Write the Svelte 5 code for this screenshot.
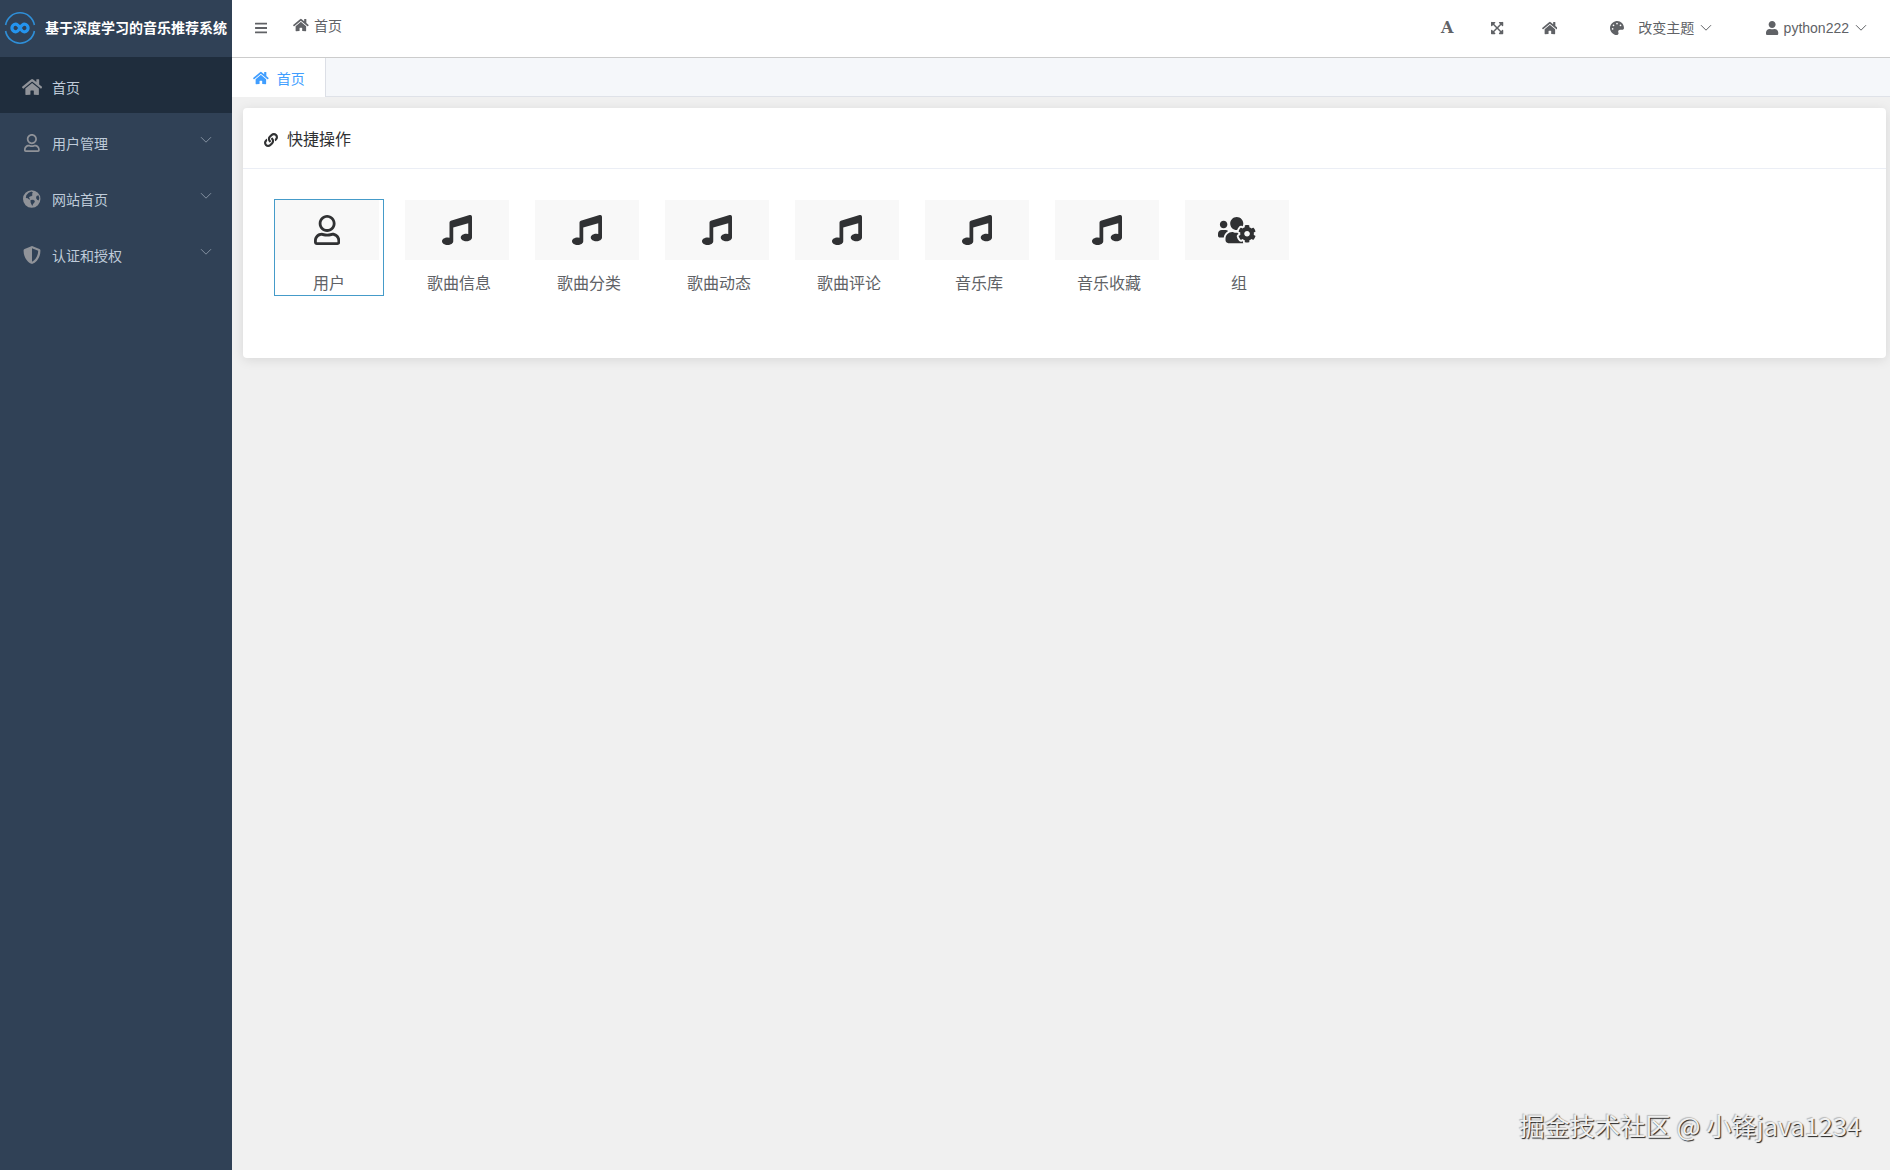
<script lang="ts">
	type Icon = { box: string; d: string };

	const icons: Record<string, Icon> = {
		home: {
			box: '0 0 576 512',
			d: 'M280.37 148.26L96 300.11V464a16 16 0 0 0 16 16l112.06-.29a16 16 0 0 0 15.92-16V368a16 16 0 0 1 16-16h64a16 16 0 0 1 16 16v95.64a16 16 0 0 0 16 16.05L464 480a16 16 0 0 0 16-16V300L295.67 148.26a12.19 12.19 0 0 0-15.3 0zM571.6 251.47L488 182.56V44.05a12 12 0 0 0-12-12h-56a12 12 0 0 0-12 12v72.61L318.47 43a48 48 0 0 0-61 0L4.34 251.47a12 12 0 0 0-1.6 16.9l25.5 31A12 12 0 0 0 45.15 301l235.22-193.74a12.19 12.19 0 0 1 15.3 0L530.9 301a12 12 0 0 0 16.9-1.6l25.5-31a12 12 0 0 0-1.7-16.93z'
		},
		userLine: {
			box: '0 0 448 512',
			d: 'M313.6 304c-28.7 0-42.5 16-89.6 16-47.1 0-60.8-16-89.6-16C60.2 304 0 364.2 0 438.4V464c0 26.5 21.5 48 48 48h352c26.5 0 48-21.5 48-48v-25.6c0-74.2-60.2-134.4-134.4-134.4zM400 464H48v-25.6c0-47.6 38.8-86.4 86.4-86.4 14.6 0 38.3 16 89.6 16 51.7 0 74.9-16 89.6-16 47.6 0 86.4 38.8 86.4 86.4V464zM224 288c79.5 0 144-64.5 144-144S303.5 0 224 0 80 64.5 80 144s64.5 144 144 144zm0-240c52.9 0 96 43.1 96 96s-43.1 96-96 96-96-43.1-96-96 43.1-96 96-96z'
		},
		user: {
			box: '0 0 448 512',
			d: 'M224 256c70.7 0 128-57.3 128-128S294.7 0 224 0 96 57.3 96 128s57.3 128 128 128zm89.6 32h-16.7c-22.2 10.2-46.9 16-72.9 16s-50.6-5.8-72.9-16h-16.7C60.2 288 0 348.2 0 422.4V464c0 26.5 21.5 48 48 48h352c26.5 0 48-21.5 48-48v-41.6c0-74.2-60.2-134.4-134.4-134.4z'
		},
		music: {
			box: '0 0 512 512',
			d: 'M470.38 1.51L150.41 96A32 32 0 0 0 128 126.51v261.41A139 139 0 0 0 96 384c-53 0-96 28.66-96 64s43 64 96 64 96-28.66 96-64V214.32l256-75v184.61a138.4 138.4 0 0 0-32-3.93c-53 0-96 28.66-96 64s43 64 96 64 96-28.65 96-64V32a32 32 0 0 0-41.62-30.49z'
		},
		globe: {
			box: '0 0 496 512',
			d: 'M248 8a248 248 0 1 0 0 496a248 248 0 1 0 0-496zM95 150L160 75L240 45L285 75L250 115L275 145L235 180L195 185L165 225L205 250L180 275L135 235L80 225zM215 285L290 280L340 310L320 365L285 400L265 455L235 400L215 345zM385 170L440 150L465 225L445 300L400 275L370 225z'
		},
		shield: {
			box: '0 0 512 512',
			d: 'M466.5 83.7l-192-80a48.15 48.15 0 0 0-36.9 0l-192 80C27.7 91.1 16 108.6 16 128c0 198.5 114.5 335.7 221.5 380.3 11.8 4.9 25.1 4.9 36.9 0C360.1 472.6 496 349.3 496 128c0-19.4-11.7-36.9-29.5-44.3zM256.1 446.3l-.1-381 175.9 73.3c-3.3 151.4-82.1 261.1-175.8 307.7z'
		},
		palette: {
			box: '0 0 512 512',
			d: 'M204.3 5C104.9 24.4 24.8 104.3 5.2 203.4c-37 187 131.7 326.4 258.8 306.7 41.2-6.4 61.4-54.6 42.5-91.7-23.1-45.4 9.9-98.4 60.9-98.4h79.7c35.8 0 64.8-29.6 64.9-65.3C511.5 97.1 368.1-26.9 204.3 5zM96 320c-17.7 0-32-14.3-32-32s14.3-32 32-32 32 14.3 32 32-14.3 32-32 32zm32-128c-17.7 0-32-14.3-32-32s14.3-32 32-32 32 14.3 32 32-14.3 32-32 32zm128-64c-17.7 0-32-14.3-32-32s14.3-32 32-32 32 14.3 32 32-14.3 32-32 32zm128 64c-17.7 0-32-14.3-32-32s14.3-32 32-32 32 14.3 32 32-14.3 32-32 32z'
		},
		bars: {
			box: '0 0 448 512',
			d: 'M16 60h416a16 16 0 0 1 16 16v40a16 16 0 0 1-16 16H16a16 16 0 0 1-16-16V76a16 16 0 0 1 16-16zM16 220h416a16 16 0 0 1 16 16v40a16 16 0 0 1-16 16H16a16 16 0 0 1-16-16v-40a16 16 0 0 1 16-16zM16 380h416a16 16 0 0 1 16 16v40a16 16 0 0 1-16 16H16a16 16 0 0 1-16-16v-40a16 16 0 0 1 16-16z'
		},
		expand: {
			box: '0 0 448 512',
			d: 'M448 344v112a23.94 23.94 0 0 1-24 24H312c-21.39 0-32.09-25.9-17-41l36.2-36.2L224 295.6 116.77 402.9 153 439c15.09 15.1 4.39 41-17 41H24a23.94 23.94 0 0 1-24-24V344c0-21.4 25.89-32.1 41-17l36.19 36.2L184.46 256 77.18 148.7 41 185c-15.1 15.1-41 4.4-41-17V56a23.94 23.94 0 0 1 24-24h112c21.39 0 32.09 25.9 17 41l-36.2 36.2L224 216.4l107.23-107.3L295 73c-15.09-15.1-4.39-41 17-41h112a23.94 23.94 0 0 1 24 24v112c0 21.4-25.89 32.1-41 17l-36.19-36.2L263.54 256l107.28 107.3L407 327.1c15.1-15.2 41-4.5 41 16.9z'
		},
		link: {
			box: '0 0 512 512',
			d: 'M326.612 185.391c59.747 59.809 58.927 155.698.36 214.59-.11.12-.24.25-.36.37l-67.2 67.2c-59.27 59.27-155.699 59.262-214.96 0-59.27-59.26-59.27-155.7 0-214.96l37.106-37.106c9.84-9.84 26.786-3.3 27.294 10.606.648 17.722 3.826 35.527 9.69 52.721 1.986 5.822.567 12.262-3.783 16.612l-13.087 13.087c-28.026 28.026-28.905 73.66-1.155 101.96 28.024 28.579 74.086 28.749 102.325.51l67.2-67.19c28.191-28.191 28.073-73.757 0-101.83-3.701-3.694-7.429-6.564-10.341-8.569a16.037 16.037 0 0 1-6.947-12.606c-.396-10.567 3.348-21.456 11.698-29.806l21.054-21.055c5.521-5.521 14.182-6.199 20.584-1.731a152.482 152.482 0 0 1 20.522 17.197zM467.547 44.449c-59.261-59.262-155.69-59.27-214.96 0l-67.2 67.2c-.12.12-.25.25-.36.37-58.566 58.892-59.387 154.781.36 214.59a152.454 152.454 0 0 0 20.521 17.196c6.402 4.468 15.064 3.789 20.584-1.731l21.054-21.055c8.35-8.35 12.094-19.239 11.698-29.806a16.037 16.037 0 0 0-6.947-12.606c-2.912-2.005-6.64-4.875-10.341-8.569-28.073-28.073-28.191-73.639 0-101.83l67.2-67.19c28.239-28.239 74.3-28.069 102.325.51 27.75 28.3 26.872 73.934-1.155 101.96l-13.087 13.087c-4.35 4.35-5.769 10.79-3.783 16.612 5.864 17.194 9.042 34.999 9.69 52.721.509 13.906 17.454 20.446 27.294 10.606l37.106-37.106c59.271-59.259 59.271-155.699.001-214.959z'
		},
		usersCog: {
			box: '0 0 640 512',
			d: 'M610.5 341.3c2.6-14.1 2.6-28.5 0-42.6l25.8-14.9c3-1.7 4.3-5.2 3.3-8.5-6.7-21.6-18.2-41.2-33.2-57.4-2.3-2.5-6-3.1-9-1.4l-25.8 14.9c-10.9-9.3-23.4-16.5-36.9-21.3v-29.8c0-3.4-2.4-6.4-5.7-7.1-22.3-5-45-4.8-66.2 0-3.3.7-5.7 3.7-5.7 7.1v29.8c-13.5 4.8-26 12-36.9 21.3l-25.8-14.9c-2.9-1.7-6.7-1.1-9 1.4-15 16.2-26.5 35.8-33.2 57.4-1 3.3.4 6.8 3.3 8.5l25.8 14.9c-2.6 14.1-2.6 28.5 0 42.6l-25.8 14.9c-3 1.7-4.3 5.2-3.3 8.5 6.7 21.6 18.2 41.1 33.2 57.4 2.3 2.5 6 3.1 9 1.4l25.8-14.9c10.9 9.3 23.4 16.5 36.9 21.3v29.8c0 3.4 2.4 6.4 5.7 7.1 22.3 5 45 4.8 66.2 0 3.3-.7 5.7-3.7 5.7-7.1v-29.8c13.5-4.8 26-12 36.9-21.3l25.8 14.9c2.9 1.7 6.7 1.1 9-1.4 15-16.2 26.5-35.8 33.2-57.4 1-3.3-.4-6.8-3.3-8.5l-25.8-14.9zM496 368.5c-26.8 0-48.5-21.8-48.5-48.5s21.8-48.5 48.5-48.5 48.5 21.8 48.5 48.5-21.7 48.5-48.5 48.5zM96 224c35.3 0 64-28.7 64-64s-28.7-64-64-64-64 28.7-64 64 28.7 64 64 64zm224 32c1.9 0 3.7-.5 5.6-.6 8.3-21.7 20.5-42.1 36.3-59.2 7.4-8 17.9-12.6 28.9-12.6 6.9 0 13.7 1.8 19.6 5.3l7.9 4.6c.8-.5 1.6-.9 2.4-1.4 7-14.6 11.2-30.8 11.2-48 0-61.9-50.1-112-112-112S208 82.1 208 144c0 61.9 50.1 112 112 112zm105.2 194.5c-2.3-1.2-4.6-2.6-6.8-3.9-8.2 4.8-15.3 9.8-27.5 9.8-10.9 0-21.4-4.6-28.9-12.6-18.3-19.8-32.3-43.9-40.2-69.6-10.7-34.5 24.9-49.7 25.8-50.3-.1-2.6-.1-5.2 0-7.8l-7.9-4.6c-3.8-2.2-7-5-9.8-8.1-3.3.2-6.5.6-9.8.6-24.6 0-47.6-6-68.5-16h-8.3C179.6 288 128 339.6 128 403.2V432c0 26.5 21.5 48 48 48h255.4c-3.7-6-6.2-12.8-6.2-20.3v-9.2zM173.1 274.6C161.5 263.1 145.6 256 128 256H64c-35.3 0-64 28.7-64 64v32c0 17.7 14.3 32 32 32h65.9c6.3-47.4 34.9-87.3 75.2-109.4z'
		}
	};

	const menu = [
		{ icon: 'home', label: '首页', open: false },
		{ icon: 'userLine', label: '用户管理', open: true },
		{ icon: 'globe', label: '网站首页', open: true },
		{ icon: 'shield', label: '认证和授权', open: true }
	];

	const quick = [
		{ icon: 'userLine', label: '用户' },
		{ icon: 'music', label: '歌曲信息' },
		{ icon: 'music', label: '歌曲分类' },
		{ icon: 'music', label: '歌曲动态' },
		{ icon: 'music', label: '歌曲评论' },
		{ icon: 'music', label: '音乐库' },
		{ icon: 'music', label: '音乐收藏' },
		{ icon: 'usersCog', label: '组' }
	];

	let active = $state(0);
	let hovered = $state(0);
</script>

{#snippet glyph(name: string)}
	<svg class="glyph" viewBox={icons[name].box} aria-hidden="true">
		<path d={icons[name].d} fill-rule="evenodd" />
	</svg>
{/snippet}

{#snippet chevron()}
	<svg class="chevron" viewBox="0 0 12 12" aria-hidden="true">
		<path d="M1 3.2l5 5 5-5" />
	</svg>
{/snippet}

<div class="shell">
	<aside class="sidebar">
		<div class="brand">
			<svg class="logo" viewBox="0 0 32 32" aria-hidden="true">
				<path class="ring" d="M1.6 13a14.6 14.6 0 0 1 28.8 0M30.4 19a14.6 14.6 0 0 1-28.8 0" />
				<path class="loop" d="M16 16c-1.600-2.600-2.800-3.800-4.300-3.800a3.800 3.800 0 0 0 0 7.600c1.500 0 2.700-1.200 4.300-3.800s2.800-3.800 4.300-3.800a3.800 3.800 0 0 1 0 7.600c-1.500 0-2.700-1.200-4.300-3.800z" />
			</svg>
			<span>基于深度学习的音乐推荐系统</span>
		</div>
		<nav>
			{#each menu as item, i}
				<button class="entry" class:active={active === i} onclick={() => (active = i)}>
					<span class="entry-icon">{@render glyph(item.icon)}</span>
					<span class="entry-label">{item.label}</span>
					{#if item.open}{@render chevron()}{/if}
				</button>
			{/each}
		</nav>
	</aside>

	<div class="main">
		<header class="topbar">
			<button class="tool fold">{@render glyph('bars')}</button>
			<span class="crumb">{@render glyph('home')}首页</span>
			<div class="tools">
				<button class="tool letter">A</button>
				<button class="tool full">{@render glyph('expand')}</button>
				<button class="tool house">{@render glyph('home')}</button>
				<button class="tool theme">{@render glyph('palette')}<span>改变主题</span>{@render chevron()}</button>
				<button class="tool account">{@render glyph('user')}<span>python222</span>{@render chevron()}</button>
			</div>
		</header>

		<div class="tabs">
			<div class="tab">{@render glyph('home')}<span>首页</span></div>
		</div>

		<main>
			<section class="card">
				<h2>{@render glyph('link')}<span>快捷操作</span></h2>
				<div class="quick">
					{#each quick as q, i}
						<button class="quick-item" class:hovered={hovered === i} onmouseenter={() => (hovered = i)}>
							<span class="quick-icon">{@render glyph(q.icon)}</span>
							<span class="quick-label">{q.label}</span>
						</button>
					{/each}
				</div>
			</section>
		</main>
	</div>

	<div class="credit">掘金技术社区 @ 小锋java1234</div>
</div>

<style>
	:global(body) {
		margin: 0;
	}
	.shell {
		position: relative;
		display: flex;
		height: 1170px;
		overflow: hidden;
		background: #f0f0f0;
		color: #606266;
		font-family: 'Liberation Sans', 'Noto Sans CJK SC', sans-serif;
		font-size: 14px;
	}
	button {
		padding: 0;
		border: 0;
		background: none;
		color: inherit;
		font: inherit;
		cursor: pointer;
	}
	.glyph {
		display: block;
		flex: none;
		height: 1em;
		fill: currentColor;
	}
	.chevron {
		flex: none;
		width: 12px;
		height: 12px;
		fill: none;
		stroke: currentColor;
		stroke-width: 1;
	}

	/* sidebar */
	.sidebar {
		flex: none;
		width: 232px;
		background: #304156;
	}
	.brand {
		display: flex;
		align-items: center;
		gap: 9px;
		box-sizing: border-box;
		height: 57px;
		padding: 0 0 2px 4px;
		color: #fff;
		font-weight: bold;
		white-space: nowrap;
	}
	.brand span {
		padding-bottom: 2px;
	}
	.logo {
		flex: none;
		width: 32px;
		height: 32px;
		fill: none;
	}
	.ring {
		stroke: #2f8fd8;
		stroke-width: 1.6;
	}
	.loop {
		stroke: #2494ee;
		stroke-width: 3.2;
	}
	.entry {
		display: flex;
		align-items: center;
		box-sizing: border-box;
		width: 100%;
		height: 56px;
		padding: 4px 20px 0;
		color: #bfcbd9;
		text-align: left;
	}
	.entry.active {
		background: #1f2d3d;
	}
	.entry-icon {
		display: flex;
		justify-content: center;
		width: 24px;
		margin-right: 8px;
		color: #909399;
		font-size: 18px;
	}
	.entry-label {
		flex: 1;
	}
	.entry .chevron {
		margin-top: -7px;
		color: #8390a0;
	}

	/* header */
	.main {
		flex: 1;
		min-width: 0;
	}
	.topbar {
		display: flex;
		align-items: center;
		box-sizing: border-box;
		height: 58px;
		padding: 0 23px 2px;
		border-bottom: 1px solid #ccc;
		background: #fff;
	}
	.tool {
		display: flex;
		align-items: center;
	}
	.crumb {
		display: flex;
		align-items: center;
		gap: 5px;
		margin: 0 0 5px 26px;
	}
	.tools {
		display: flex;
		align-items: center;
		margin-left: auto;
	}
	.letter {
		font: bold 16px 'DejaVu Serif', serif;
	}
	.full {
		margin-left: 38px;
	}
	.house {
		margin-left: 38px;
	}
	.theme {
		margin-left: 53px;
	}
	.theme span {
		margin: 0 6px 2px 14px;
	}
	.account {
		margin-left: 54px;
	}
	.account span {
		margin: 0 6px 0 5px;
	}

	/* tabs */
	.tabs {
		display: flex;
		box-sizing: border-box;
		height: 39px;
		border-bottom: 1px solid #dfe2e8;
		background: #f5f7fa;
	}
	.tab {
		display: flex;
		align-items: center;
		gap: 8px;
		box-sizing: border-box;
		width: 94px;
		height: 39px;
		padding: 0 0 0 21px;
		border-right: 1px solid #dcdfe6;
		background: #fff;
		color: #409eff;
	}

	/* quick actions card */
	main {
		padding: 11px 4px 0 11px;
	}
	.card {
		box-sizing: border-box;
		height: 250px;
		border-radius: 4px;
		background: #fff;
		box-shadow: 0 2px 12px rgba(0, 0, 0, 0.1);
	}
	h2 {
		display: flex;
		align-items: center;
		gap: 9px;
		box-sizing: border-box;
		height: 61px;
		margin: 0;
		padding: 0 21px;
		border-bottom: 1px solid #ebeef5;
		color: #303133;
		font-size: 16px;
		font-weight: normal;
	}
	h2 .glyph {
		height: 14px;
		margin-top: 3px;
	}
	.quick {
		display: flex;
		gap: 20px;
		padding: 30px 31px 0;
	}
	.quick-item {
		display: flex;
		flex-direction: column;
		justify-content: flex-start;
		box-sizing: border-box;
		width: 110px;
		height: 97px;
		border: 1px solid transparent;
		color: #606266;
	}
	.quick-item.hovered {
		border-color: #459bc9;
	}
	.quick-icon {
		display: flex;
		flex: none;
		align-items: center;
		justify-content: center;
		width: 104px;
		height: 60px;
		background: #f8f8f8;
		color: #303133;
		font-size: 30px;
	}
	.quick-label {
		align-self: center;
		margin-top: 12px;
		font-size: 16px;
		line-height: 24px;
	}

	.credit {
		position: absolute;
		right: 29px;
		bottom: 27px;
		color: #f0f0f0;
		font: 25.3px/36px 'Noto Sans CJK SC', sans-serif;
		text-shadow: 1px 1px 1px #222, -1px -1px 1px #bbb;
		white-space: nowrap;
	}
</style>
